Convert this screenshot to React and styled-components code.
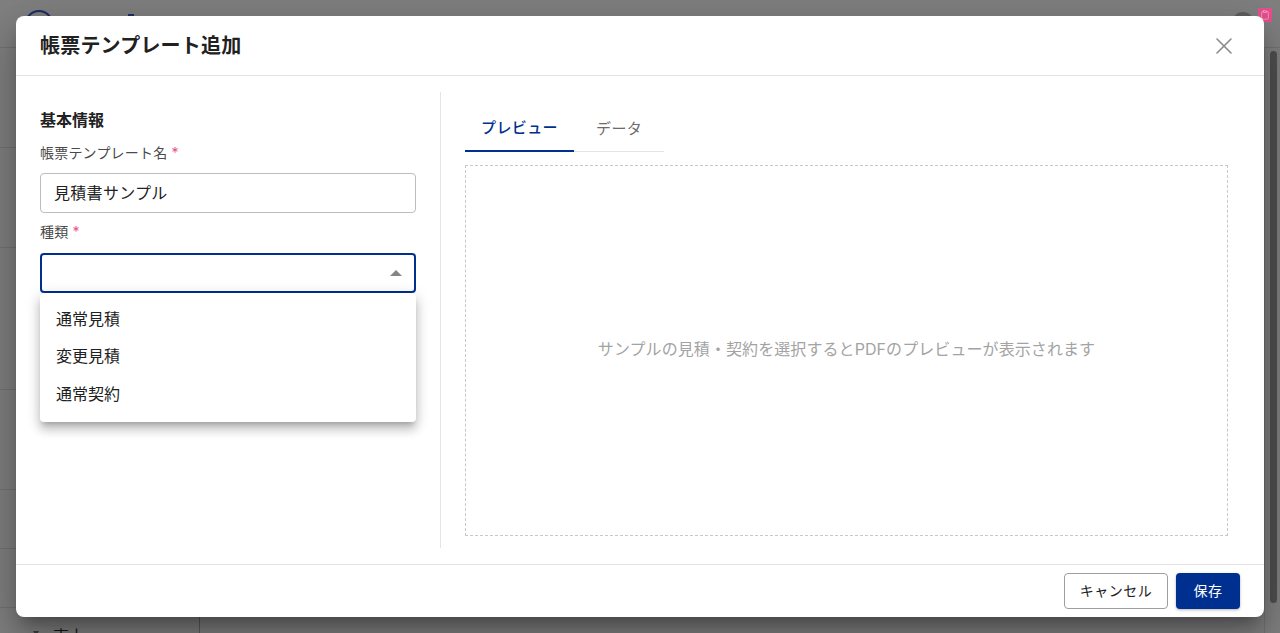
import React from 'react'
import styled, { createGlobalStyle } from 'styled-components'
import { X, Clipboard } from 'lucide-react'

const FONT = `Inter, "Noto Sans CJK JP", sans-serif`

const GlobalStyle = createGlobalStyle`
    html, body {
        margin: 0;
        height: 100%;
        overflow: hidden;
    }
    * {
        box-sizing: border-box;
    }
`

const Page = styled.div`
    width: 1280px;
    height: 633px;
    position: relative;
    overflow: hidden;
    background: #808080;
    font-family: ${FONT};
    color: #212121;
`

const Backdrop = styled.div`
    height: 100%;
    display: flex;
    flex-direction: column;
`

const AppBar = styled.div`
    height: 47px;
    flex: none;
    padding: 10px 26px 0 25px;
    display: flex;
`

const Logo = styled.div`
    width: 28px;
    height: 28px;
    border: 2px solid #1b2f63;
    border-radius: 50%;
`

const NavDot = styled.div`
    width: 6px;
    height: 14px;
    margin: 4px auto 0 75px;
    background: #1b2f63;
`

const Avatar = styled.div`
    width: 22px;
    height: 22px;
    margin-top: 2px;
    border-radius: 50%;
    background: #5f5f5f;
`

const Main = styled.div`
    flex: 1;
    min-height: 0;
    display: flex;
    border-top: 1px solid #737373;
`

const Sidebar = styled.div`
    width: 200px;
    flex: none;
    display: flex;
    flex-direction: column;
    border-right: 1px solid #5c5c5c;
`

const SideRow = styled.div`
    height: ${props => props.$h}px;
    flex: none;
    border-bottom: 1px solid #737373;
`

const SideItem = styled.div`
    position: relative;
    padding: 16px 0 0 53px;
    font-size: 16px;
    line-height: 24px;
    color: #151515;
    &::before {
        content: '';
        position: absolute;
        left: 33px;
        top: 23px;
        border-top: 5px solid #3f3f3f;
        border-left: 3px solid transparent;
        border-right: 3px solid transparent;
    }
`

const Content = styled.div`
    flex: 1;
`

const ScrollTrack = styled.div`
    width: 16px;
    flex: none;
    margin-left: auto;
    padding: 3px 3px 30px 5px;
    border-left: 1px solid #737373;
`

const ScrollThumb = styled.div`
    height: 100%;
    border-radius: 5px;
    background: #505050;
`

const Badge = styled.div`
    position: absolute;
    top: 8px;
    right: 8px;
    width: 14px;
    height: 14px;
    background: #e9508f;
    display: flex;
    align-items: center;
    justify-content: center;
    color: #f7c4da;
`

const Modal = styled.div`
    position: absolute;
    left: 16px;
    top: 16px;
    width: 1248px;
    height: 601px;
    background: #fff;
    border-radius: 8px;
    display: flex;
    flex-direction: column;
    box-shadow: 0 11px 15px -7px rgba(0,0,0,.3), 0 24px 38px 3px rgba(0,0,0,.18), 0 9px 46px 8px rgba(0,0,0,.12);
`

const Header = styled.div`
    height: 60px;
    flex: none;
    padding: 0 24px;
    display: flex;
    align-items: center;
    justify-content: space-between;
    border-bottom: 1px solid #e4e4e4;
`

const Title = styled.h2`
    margin: 0;
    font-size: 20px;
    line-height: 28px;
    font-weight: 700;
    letter-spacing: .2px;
`

const CloseButton = styled.button`
    width: 32px;
    height: 32px;
    padding: 0;
    border: 0;
    background: none;
    color: #8c8c8c;
    display: flex;
    align-items: center;
    justify-content: center;
`

const Body = styled.div`
    flex: 1;
    min-height: 0;
    padding: 16px 24px;
    display: grid;
    grid-template-columns: 401px 1fr;
`

const LeftPane = styled.div`
    padding-right: 24px;
    border-right: 1px solid #e4e4e4;
    padding-top: 17px;
`

const SectionTitle = styled.h3`
    margin: 0;
    font-size: 16px;
    line-height: 22px;
    font-weight: 700;
`

const Field = styled.div`
    position: relative;
    margin-top: ${props => props.$mt}px;
`

const Label = styled.label`
    display: block;
    font-size: 14px;
    line-height: 20px;
    letter-spacing: .2px;
    color: #4a4a4a;
    margin-bottom: ${props => props.$mb}px;
`

const Required = styled.span`
    color: #e9508f;
    margin-left: 4px;
`

const Input = styled.div`
    height: 40px;
    padding: 0 13px 2px;
    display: flex;
    align-items: center;
    justify-content: space-between;
    font-size: 16px;
    letter-spacing: .3px;
    background: #fff;
    border-radius: 4px;
    border: ${props => props.$focused ? '2px solid #00308f' : '1px solid #bdbdbd'};
`

const Caret = styled.span`
    width: 0;
    height: 0;
    margin: 2px -1px 0 0;
    border-left: 6px solid transparent;
    border-right: 6px solid transparent;
    border-bottom: 6px solid #858585;
`

const Menu = styled.ul`
    position: absolute;
    left: 0;
    right: 0;
    top: 100%;
    margin: 0;
    padding: 6px 0 10px;
    list-style: none;
    background: #fff;
    border-radius: 4px;
    box-shadow: 0 5px 5px -3px rgba(0,0,0,.2), 0 8px 10px 1px rgba(0,0,0,.14), 0 3px 14px 2px rgba(0,0,0,.12);
`

const MenuItem = styled.li`
    height: 37.5px;
    padding: 0 16px;
    display: flex;
    align-items: center;
    font-size: 16px;
`

const RightPane = styled.div`
    padding-left: 24px;
    padding-right: 12px;
    display: flex;
    flex-direction: column;
`

const Tabs = styled.div`
    width: 199px;
    height: 60px;
    flex: none;
    display: flex;
    border-bottom: 1px solid #e4e4e4;
`

const Tab = styled.div`
    flex: none;
    height: 60px;
    padding: 10px ${props => props.$active ? 16 : 22}px 0;
    display: flex;
    align-items: center;
    white-space: nowrap;
    font-size: 15px;
    letter-spacing: .4px;
    font-weight: ${props => props.$active ? 500 : 400};
    color: ${props => props.$active ? '#00308f' : '#6b6b6b'};
    border-bottom: ${props => props.$active ? '2px solid #00308f' : 'none'};
`

const Preview = styled.div`
    flex: 1;
    margin: 13px 0 12px;
    padding-bottom: 5px;
    border: 1px dashed #c8c8c8;
    display: flex;
    align-items: center;
    justify-content: center;
    font-size: 16px;
    letter-spacing: .08px;
    color: #a3a3a3;
`

const Footer = styled.div`
    height: 53px;
    flex: none;
    padding: 0 24px;
    border-top: 1px solid #e4e4e4;
    display: flex;
    align-items: center;
    justify-content: flex-end;
    gap: 8px;
`

const Button = styled.button`
    height: 36px;
    width: ${props => props.$primary ? 64 : 104}px;
    padding: 0 0 2px;
    font-family: inherit;
    font-size: 14px;
    font-weight: 400;
    letter-spacing: .5px;
    border-radius: 4px;
    color: ${props => props.$primary ? '#fff' : '#212121'};
    background: ${props => props.$primary ? '#00308f' : '#fff'};
    border: ${props => props.$primary ? '0' : '1px solid #9e9e9e'};
    box-shadow: ${props => props.$primary ? '0 1px 3px rgba(0,0,0,.3)' : 'none'};
`

const rowHeights = [100, 100, 142, 100, 59, 59]

const App = () => {
    return (
        <Page>
            <GlobalStyle />
            <Backdrop>
                <AppBar>
                    <Logo />
                    <NavDot />
                    <Avatar />
                </AppBar>
                <Main>
                    <Sidebar>
                        {rowHeights.map((h, i) => <SideRow key={i} $h={h} />)}
                        <SideItem>売上</SideItem>
                    </Sidebar>
                    <Content />
                    <ScrollTrack>
                        <ScrollThumb />
                    </ScrollTrack>
                </Main>
            </Backdrop>
            <Badge><Clipboard size={10} strokeWidth={1.5} /></Badge>
            <Modal>
                <Header>
                    <Title>帳票テンプレート追加</Title>
                    <CloseButton><X size={28} strokeWidth={1.4} /></CloseButton>
                </Header>
                <Body>
                    <LeftPane>
                        <SectionTitle>基本情報</SectionTitle>
                        <Field $mt={12}>
                            <Label $mb={10}>帳票テンプレート名<Required>*</Required></Label>
                            <Input>見積書サンプル</Input>
                        </Field>
                        <Field $mt={9}>
                            <Label $mb={11}>種類<Required>*</Required></Label>
                            <Input $focused><span /><Caret /></Input>
                            <Menu>
                                <MenuItem>通常見積</MenuItem>
                                <MenuItem>変更見積</MenuItem>
                                <MenuItem>通常契約</MenuItem>
                            </Menu>
                        </Field>
                    </LeftPane>
                    <RightPane>
                        <Tabs>
                            <Tab $active>プレビュー</Tab>
                            <Tab>データ</Tab>
                        </Tabs>
                        <Preview>サンプルの見積・契約を選択するとPDFのプレビューが表示されます</Preview>
                    </RightPane>
                </Body>
                <Footer>
                    <Button>キャンセル</Button>
                    <Button $primary>保存</Button>
                </Footer>
            </Modal>
        </Page>
    )
}

export default App
